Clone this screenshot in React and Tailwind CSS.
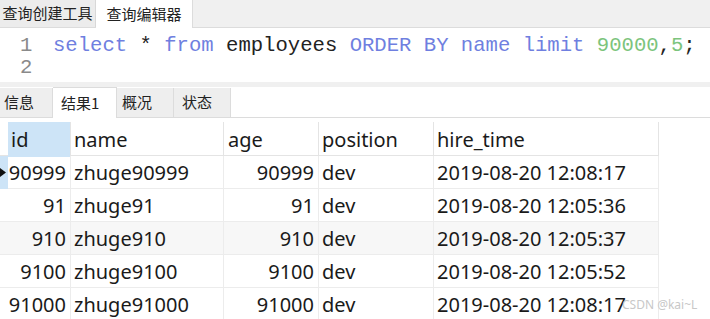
import React from "react";

const rows = [
  ["90999", "zhuge90999", "90999", "dev", "2019-08-20 12:08:17"],
  ["91", "zhuge91", "91", "dev", "2019-08-20 12:05:36"],
  ["910", "zhuge910", "910", "dev", "2019-08-20 12:05:37"],
  ["9100", "zhuge9100", "9100", "dev", "2019-08-20 12:05:52"],
  ["91000", "zhuge91000", "91000", "dev", "2019-08-20 12:08:17"],
];

const cjk = { fontFamily: '"Noto Sans CJK SC", "Noto Sans", sans-serif' };
const grid = { fontFamily: '"Noto Sans", "Noto Sans CJK SC", sans-serif' };
const mono = { fontFamily: '"Liberation Mono", "Courier New", monospace' };

export default function App() {
  return (
    <div className="w-[710px] h-[319px] overflow-hidden bg-white relative">
      {/* top tabs */}
      <div className="flex h-[28px] bg-[#f0f0f0] border-b border-[#dcdcdc] text-[15px] text-[#222]" style={cjk}>
        <div className="w-[96px] flex items-center justify-center bg-[#ececec] border-r border-[#d8d8d8]">查询创建工具</div>
        <div className="w-[96px] flex items-center justify-center bg-white -mb-px">查询编辑器</div>
        <div className="flex-1 bg-[#f0f0f0] border-l border-[#dcdcdc]"></div>
      </div>
      {/* editor */}
      <div className="h-[54px] bg-white pt-[7px] text-[20.6px] leading-[22px]" style={mono}>
        <div className="flex">
          <div className="w-[53px] pl-[20px] text-[#8a8a8a]">1</div>
          <div className="whitespace-pre text-[#222]">
            <span className="text-[#6f7fe0]">select</span> * <span className="text-[#6f7fe0]">from</span> employees <span className="text-[#6f7fe0]">ORDER BY</span> <span className="text-[#6f7fe0]">name</span> <span className="text-[#6f7fe0]">limit</span> <span className="text-[#7cc47c]">90000</span>,<span className="text-[#7cc47c]">5</span>;
          </div>
        </div>
        <div className="flex">
          <div className="w-[53px] pl-[20px] text-[#8a8a8a]">2</div>
        </div>
      </div>
      <div className="h-[5px] bg-[#f0f0f0]"></div>
      {/* result tabs */}
      <div className="flex h-[31px] border-b border-[#dcdcdc] text-[15px] text-[#222] bg-white" style={cjk}>
        <div className="w-[53px] flex items-center pl-[4px] bg-[#eeeeee] border-r border-[#dcdcdc] mt-[1px]">信息</div>
        <div className="w-[64px] flex items-center pl-[8px] bg-white border-r border-t border-[#dcdcdc] -mb-px">结果1</div>
        <div className="w-[57px] flex items-center pl-[5px] bg-[#eeeeee] border-r border-[#dcdcdc] mt-[1px]">概况</div>
        <div className="w-[57px] flex items-center pl-[8px] bg-[#eeeeee] border-r border-[#dcdcdc] mt-[1px]">状态</div>
        <div className="flex-1"></div>
      </div>
      {/* grid */}
      <div className="mt-[4px] text-[20px] text-[#1a1a1a] w-[659px]" style={grid}>
        <div className="grid grid-cols-[8px_63px_153px_95px_115px_225px] h-[34px] border-b border-[#e4e4e4] leading-[35px]">
          <div></div>
          <div className="bg-[#cde4f7] pl-[3px] border-r border-[#e4e4e4]">id</div>
          <div className="pl-[3px] border-r border-[#e4e4e4]">name</div>
          <div className="pl-[4px] border-r border-[#e4e4e4]">age</div>
          <div className="pl-[3px] border-r border-[#e4e4e4]">position</div>
          <div className="pl-[3px] border-r border-[#e4e4e4]">hire_time</div>
        </div>
        {rows.map((r, i) => (
          <div
            key={i}
            className={`grid grid-cols-[8px_63px_153px_95px_115px_225px] h-[33px] border-b border-[#ececec] leading-[33px] ${i === 2 ? "bg-[#f7f7f7]" : "bg-white"}`}
          >
            <div className={`relative ${i === 0 ? "bg-[#cde4f7]" : ""}`}>
              {i === 0 && (
                <svg className="absolute left-0 top-[12px]" width="6" height="9" viewBox="0 0 6 9">
                  <path d="M0 0 L6 4.5 L0 9 Z" fill="#111" />
                </svg>
              )}
            </div>
            <div className="text-right pr-[4px] border-r border-[#ececec]">{r[0]}</div>
            <div className="pl-[3px] border-r border-[#ececec]">{r[1]}</div>
            <div className="text-right pr-[4px] border-r border-[#ececec]">{r[2]}</div>
            <div className="pl-[3px] border-r border-[#ececec]">{r[3]}</div>
            <div className="pl-[3px] border-r border-[#ececec]">{r[4]}</div>
          </div>
        ))}
      </div>
      <div className="absolute left-[622px] top-[296px] text-[12px] text-[#c8c8c8]" style={grid}>CSDN @kai~L</div>
    </div>
  );
}
